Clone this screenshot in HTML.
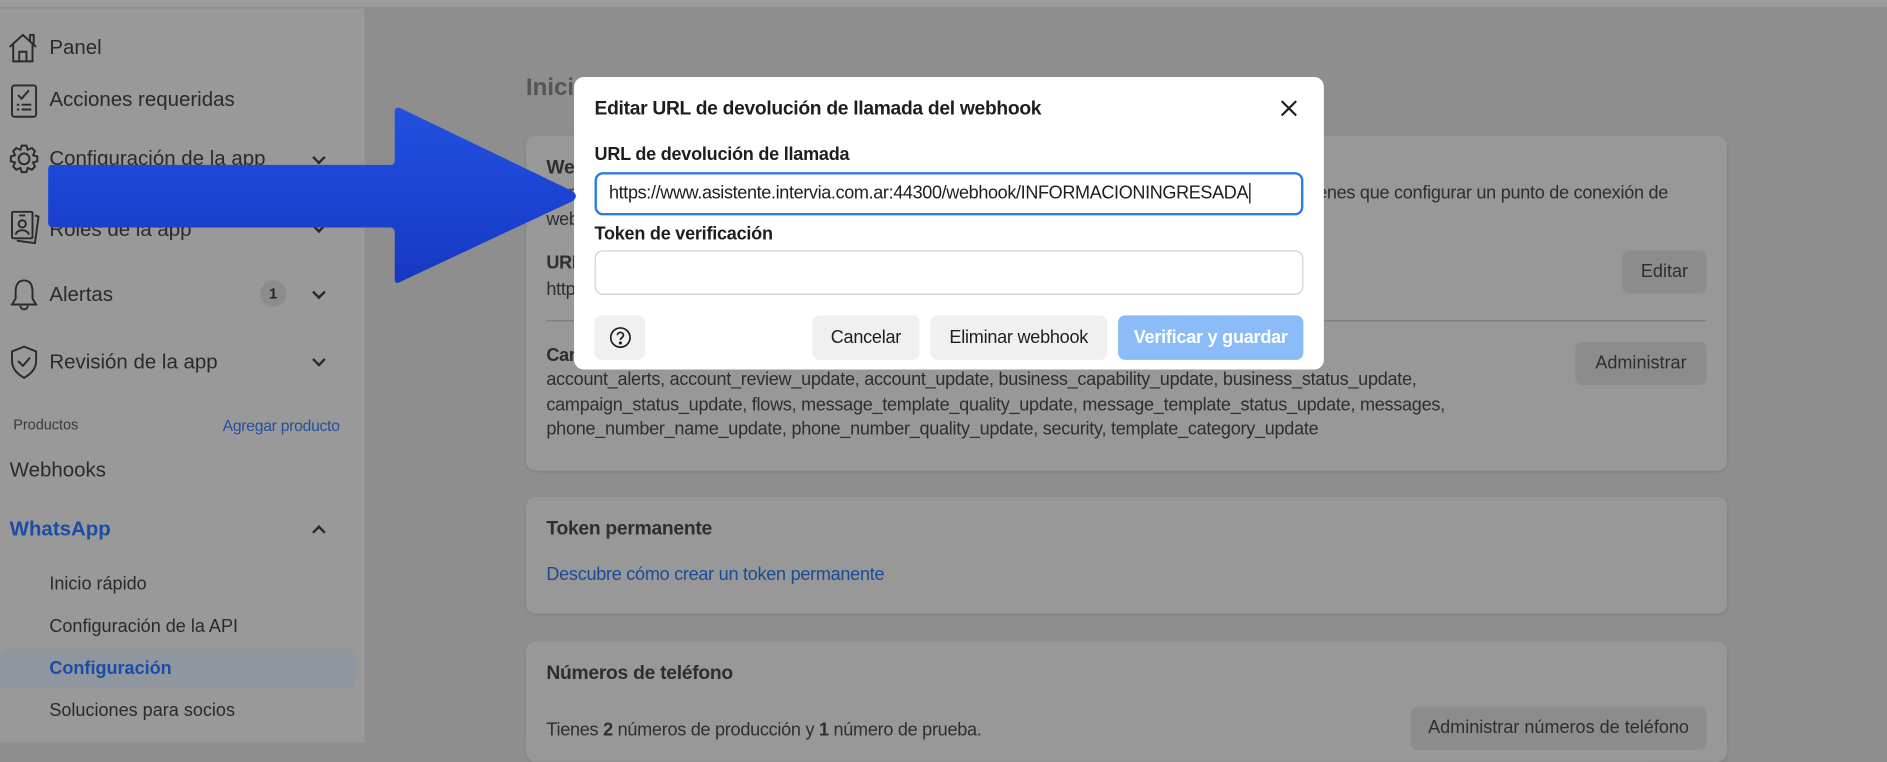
<!DOCTYPE html>
<html><head><meta charset="utf-8"><style>
*{box-sizing:border-box;margin:0;padding:0}
html,body{width:1887px;height:743px;overflow:hidden;background:#8e8e8e;font-family:"Liberation Sans",sans-serif}
#w{position:absolute;left:0;top:0;width:1568px;height:617px;transform:scale(1.2035);transform-origin:0 0;background:#8e8e8e}
.a{position:absolute;white-space:nowrap}
.sb{position:absolute;left:0;top:7px;width:303px;height:610px;background:#999}
.top{position:absolute;left:0;top:0;width:1568px;height:7px;background:#9b9b9b;border-bottom:1px solid #8a8a8a}
.it{font-size:17px;color:#2a2a2a}
.sub{font-size:15px;color:#2a2a2a}
.chev{position:absolute;width:8px;height:8px;border-right:2px solid #2a2a2a;border-bottom:2px solid #2a2a2a;transform:rotate(45deg)}
.card{position:absolute;left:437px;width:998px;background:#989898;border-radius:8px;box-shadow:0 1px 2px rgba(0,0,0,.1)}
.t{font-size:15px;color:#2e2e2e;letter-spacing:-0.22px}
.b{font-weight:bold}
.btn{position:absolute;background:#8c8c8c;border-radius:6px;font-size:15px;color:#2e2e2e;text-align:center}
.m{position:absolute;left:477px;top:64px;width:623px;height:243px;background:#fff;border-radius:8px}
.mb{position:absolute;top:198px;height:37px;border-radius:6px;background:#f0f0f0;font-size:15px;color:#1c1e21;line-height:37px;text-align:center;letter-spacing:-0.2px}
svg.ic{position:absolute}
</style></head><body><div id="w">
<div class="top"></div>
<div class="sb"></div>
<svg class="ic" style="left:6px;top:26px" width="26" height="28" viewBox="0 0 26 28" fill="none" stroke="#2a2a2a" stroke-width="1.6"><path d="M2 13 L13 3 L24 13 M5 11 V25 H21 V11 M10 25 V17 H16 V25 M19 8 V3 H22 V11"/></svg>
<svg class="ic" style="left:9px;top:70px" width="22" height="28" viewBox="0 0 22 28" fill="none" stroke="#2a2a2a" stroke-width="1.6"><rect x="1" y="1" width="20" height="26" rx="2"/><path d="M6 9 L9 12 L15 5 M5 17 H7 M9 17 H17 M5 21 H7 M9 21 H17"/></svg>
<svg class="ic" style="left:7px;top:119px" width="26" height="26" viewBox="0 0 26 26" fill="none" stroke="#2a2a2a" stroke-width="1.6"><circle cx="13" cy="13" r="4.5"/><path d="M11 2 H15 L16 5.5 L19.5 4 L22 6.5 L20.5 10 L24 11 V15 L20.5 16 L22 19.5 L19.5 22 L16 20.5 L15 24 H11 L10 20.5 L6.5 22 L4 19.5 L5.5 16 L2 15 V11 L5.5 10 L4 6.5 L6.5 4 L10 5.5 Z"/></svg>
<svg class="ic" style="left:8px;top:175px" width="26" height="28" viewBox="0 0 26 28" fill="none" stroke="#2a2a2a" stroke-width="1.6"><rect x="2" y="1" width="17" height="22" rx="1"/><path d="M21 4 L24 5 L21 27 L6 25"/><circle cx="10.5" cy="11" r="3"/><path d="M5 20 C6 15 15 15 16 20 M8 4 H13"/></svg>
<svg class="ic" style="left:8px;top:230px" width="24" height="30" viewBox="0 0 24 30" fill="none" stroke="#2a2a2a" stroke-width="1.6"><path d="M12 3 C6 3 5 8 5 13 V18 L2 23 H22 L19 18 V13 C19 8 18 3 12 3 Z M9 24 C9 28 15 28 15 24"/></svg>
<svg class="ic" style="left:8px;top:286px" width="24" height="30" viewBox="0 0 24 30" fill="none" stroke="#2a2a2a" stroke-width="1.6"><path d="M12 2 L22 6 V14 C22 21 17 25 12 28 C7 25 2 21 2 14 V6 Z M7 14 L11 18 L17 11"/></svg>
<div class="a it" style="left:41px;top:30px">Panel</div>
<div class="a it" style="left:41px;top:73px">Acciones requeridas</div>
<div class="a it" style="left:41px;top:122px">Configuración de la app</div>
<div class="a it" style="left:41px;top:181px">Roles de la app</div>
<div class="a it" style="left:41px;top:235px">Alertas</div>
<div class="a" style="left:216px;top:233px;width:22px;height:22px;border-radius:11px;background:#8c8c8c;font-size:12px;font-weight:bold;text-align:center;line-height:22px;color:#222">1</div>
<div class="a it" style="left:41px;top:291px">Revisión de la app</div>
<div class="chev" style="left:261px;top:127px"></div>
<div class="chev" style="left:261px;top:184px"></div>
<div class="chev" style="left:261px;top:239px"></div>
<div class="chev" style="left:261px;top:295px"></div>
<div class="a" style="left:11px;top:346px;font-size:12px;color:#3a3a3a">Productos</div>
<div class="a" style="left:185px;top:346px;font-size:13px;color:#234f9c;letter-spacing:-0.2px">Agregar producto</div>
<div class="a it" style="left:8px;top:381px">Webhooks</div>
<div class="a it b" style="left:8px;top:430px;color:#1a4da6">WhatsApp</div>
<div class="chev" style="left:261px;top:438px;transform:rotate(-135deg)"></div>
<div class="a sub" style="left:41px;top:477px">Inicio rápido</div>
<div class="a sub" style="left:41px;top:512px">Configuración de la API</div>
<div class="a" style="left:0;top:539px;width:295px;height:33px;background:#8f96a0;border-radius:6px"></div>
<div class="a sub b" style="left:41px;top:547px;color:#1a4da6">Configuración</div>
<div class="a sub" style="left:41px;top:582px">Soluciones para socios</div>
<div class="a" style="left:437px;top:62px;font-size:20px;font-weight:bold;color:#555">Inicio</div>
<div class="card" style="top:113px;height:278px">
<div class="a t b" style="left:17px;top:18px;font-size:16px">Webhooks</div>
<div class="a t" style="left:17px;top:39px">Para recibir notificaciones, </div>
<div class="a t" style="left:600px;top:39px;width:349px;text-align:right">tienes que configurar un punto de conexión de</div>
<div class="a t" style="left:17px;top:61px">webhook</div>
<div class="a t b" style="left:17px;top:97px">URL</div>
<div class="a t" style="left:17px;top:119px">https</div>
<div class="btn" style="left:911px;top:95px;width:70px;height:36px;line-height:36px">Editar</div>
<div class="a" style="left:17px;top:153px;width:964px;height:1px;background:#7e7e7e"></div>
<div class="a t b" style="left:17px;top:174px">Campos</div>
<div class="btn" style="left:872px;top:171px;width:109px;height:36px;line-height:36px">Administrar</div>
<div class="a t" style="left:17px;top:194px">account_alerts, account_review_update, account_update, business_capability_update, business_status_update,</div>
<div class="a t" style="left:17px;top:215px">campaign_status_update, flows, message_template_quality_update, message_template_status_update, messages,</div>
<div class="a t" style="left:17px;top:235px">phone_number_name_update, phone_number_quality_update, security, template_category_update</div>
</div>
<div class="card" style="top:413px;height:97px">
<div class="a t b" style="left:17px;top:18px;font-size:16px">Token permanente</div>
<div class="a t" style="left:17px;top:56px;color:#1d4a95">Descubre cómo crear un token permanente</div>
</div>
<div class="card" style="top:533px;height:100px">
<div class="a t b" style="left:17px;top:18px;font-size:16px">Números de teléfono</div>
<div class="a t" style="left:17px;top:65px">Tienes <b>2</b> números de producción y <b>1</b> número de prueba.</div>
<div class="btn" style="left:735px;top:54px;width:246px;height:36px;line-height:36px">Administrar números de teléfono</div>
</div>
<div class="m">
<div class="a b" style="left:17px;top:18px;font-size:16px;letter-spacing:-0.25px;color:#1c1e21">Editar URL de devolución de llamada del webhook</div>
<svg class="ic" style="left:587px;top:19px" width="14" height="14" viewBox="0 0 14 14" stroke="#1c1e21" stroke-width="1.8"><path d="M1 1 L13 13 M13 1 L1 13"/></svg>
<div class="a b" style="left:17px;top:56px;font-size:15px;letter-spacing:-0.2px;color:#1c1e21">URL de devolución de llamada</div>
<div class="a" style="left:17px;top:79px;width:589px;height:36px;border:2px solid #2d7be5;border-radius:7px"></div>
<div class="a" style="left:29px;top:88px;font-size:15px;color:#1c1e21;letter-spacing:-0.3px">https://www.asistente.intervia.com.ar:44300/webhook/INFORMACIONINGRESADA<span style="border-left:1px solid #000;margin-left:1px"></span></div>
<div class="a b" style="left:17px;top:122px;font-size:15px;letter-spacing:-0.2px;color:#1c1e21">Token de verificación</div>
<div class="a" style="left:17px;top:144px;width:589px;height:37px;border:1px solid #ccd0d5;border-radius:7px"></div>
<div class="mb" style="left:17px;width:42px"><svg style="margin-top:9px" width="19" height="19" viewBox="0 0 19 19" fill="none" stroke="#1c1e21" stroke-width="1.4"><circle cx="9.5" cy="9.5" r="8"/><path d="M7 7.5 C7 4.5 12 4.5 12 7.5 C12 9.5 9.5 9.5 9.5 11.5"/><circle cx="9.5" cy="14" r=".6" fill="#1c1e21"/></svg></div>
<div class="mb" style="left:198px;width:89px">Cancelar</div>
<div class="mb" style="left:296px;width:147px">Eliminar webhook</div>
<div class="mb b" style="left:452px;width:154px;background:#8bbcf8;color:#fff">Verificar y guardar</div>
</div>
<svg class="ic" style="left:0;top:0" width="500" height="280" viewBox="0 0 500 280">
<defs><linearGradient id="g" x1="0" y1="0" x2="0" y2="1"><stop offset="0" stop-color="#2450de"/><stop offset=".5" stop-color="#1c44d4"/><stop offset="1" stop-color="#1638c0"/></linearGradient></defs>
<path d="M43 137 H325 Q328 137 328 133 V93 Q328 88 333 90 L476 159 Q481 163 476 167 L333 234 Q328 237 328 232 V193 Q328 189 324 189 H44 Q40 189 40 185 V141 Q40 137 43 137 Z" fill="url(#g)"/>
</svg>
</div></body></html>
